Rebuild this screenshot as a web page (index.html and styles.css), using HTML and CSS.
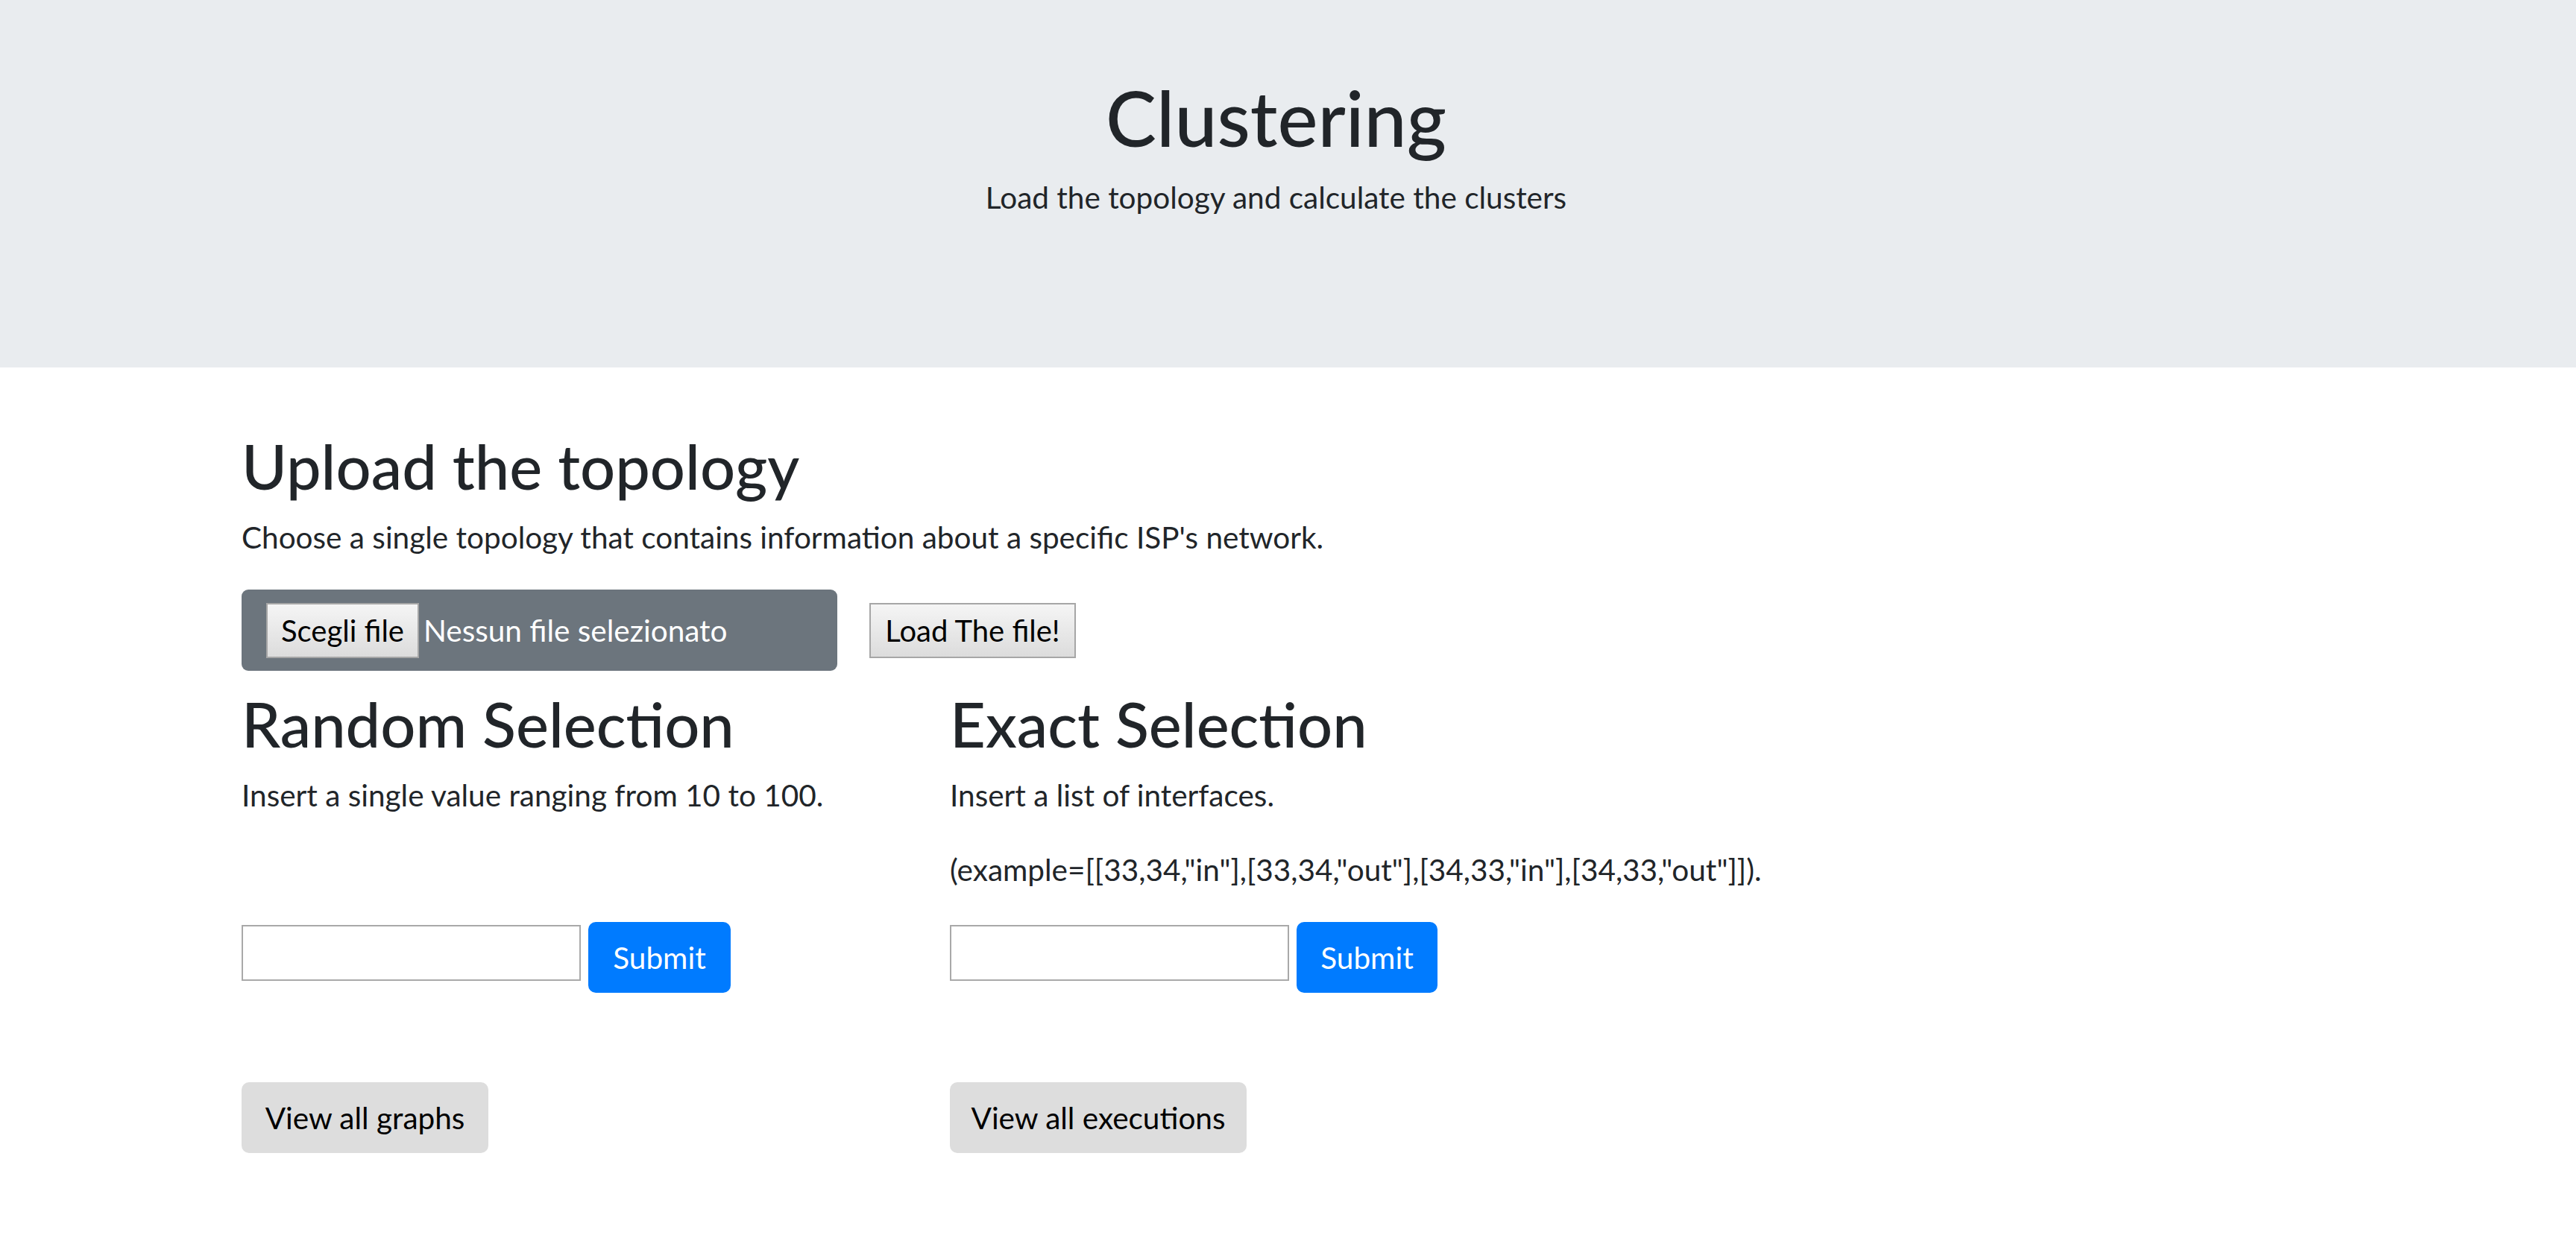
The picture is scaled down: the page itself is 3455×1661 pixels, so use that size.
FILE: index.html
```html
<!DOCTYPE html>
<html lang="en">
<head>
<meta charset="utf-8">
<title>Clustering</title>
<link rel="stylesheet" href="styles.css">
</head>
<body>
<header class="jumbo">
  <div class="wrap">
    <div class="container center">
      <h1 class="title">Clustering</h1>
      <p class="lead">Load the topology and calculate the clusters</p>
    </div>
  </div>
</header>
<main class="wrap">
  <div class="container">
    <h2 class="heading first">Upload the topology</h2>
    <p class="text">Choose a single topology that contains information about a specific ISP's network.</p>
    <div class="upload-row">
      <div class="file-box">
        <span class="native-btn choose-btn">Scegli file</span>
        <span class="file-name">Nessun file selezionato</span>
      </div>
      <button class="native-btn load-btn" type="button">Load The file!</button>
    </div>
    <div class="cols">
      <section class="col">
        <h2 class="heading">Random Selection</h2>
        <p class="text">Insert a single value ranging from 10 to 100.</p>
        <p class="text empty"></p>
        <form class="form-row">
          <input class="field" type="text">
          <button class="btn-primary submit-left" type="button">Submit</button>
        </form>
        <button class="btn-grey graphs" type="button">View all graphs</button>
      </section>
      <section class="col">
        <h2 class="heading">Exact Selection</h2>
        <p class="text">Insert a list of interfaces.</p>
        <p class="text nowrap">(example=[[33,34,"in"],[33,34,"out"],[34,33,"in"],[34,33,"out"]]).</p>
        <form class="form-row">
          <input class="field" type="text">
          <button class="btn-primary submit-right" type="button">Submit</button>
        </form>
        <button class="btn-grey executions" type="button">View all executions</button>
      </section>
    </div>
  </div>
</main>
</body>
</html>
```
FILE: styles.css
```css
* { box-sizing: border-box; }

html, body {
  margin: 0;
  padding: 0;
  background: #ffffff;
}

body {
  font-family: Lato, "Open Sans", "Noto Sans", sans-serif;
  font-size: 40.5px;
  line-height: 60px;
  color: #212529;
}

.wrap {
  width: 3423px;
}

.container {
  width: 2775px;
  margin: 0 auto;
}

.center { text-align: center; }

.jumbo {
  background: #e9ecef;
  height: 493px;
  padding-top: 95px;
}

.title {
  margin: 0;
  font-size: 102px;
  line-height: 125px;
  font-weight: 500;
}

.lead {
  margin: 15px 0 0;
  font-size: 40.5px;
  line-height: 60px;
  font-weight: 400;
}

.heading {
  margin: 21px 0 16px;
  font-size: 83px;
  line-height: 100px;
  font-weight: 500;
  white-space: nowrap;
}

.heading.first { margin-top: 82px; }

.text {
  margin: 0 0 40px;
  white-space: nowrap;
}

.text.empty { height: 60px; }

.upload-row {
  display: flex;
  align-items: center;
  gap: 43px;
}

.file-box {
  display: flex;
  align-items: center;
  width: 799px;
  height: 109px;
  padding: 0 33px;
  background: #6c757d;
  border-radius: 9px;
}

.native-btn {
  display: inline-flex;
  align-items: center;
  justify-content: center;
  height: 74px;
  font-family: inherit;
  font-size: 40px;
  color: #000000;
  background: linear-gradient(#f5f5f5, #dcdcdc);
  border: 2px solid #a6a6a6;
  border-radius: 0;
  padding: 0;
}

.choose-btn { width: 205px; }
.load-btn { width: 277px; }

.file-name {
  margin-left: 6px;
  color: #ffffff;
  white-space: nowrap;
}

.cols {
  display: grid;
  grid-template-columns: 950px 950px 1fr;
}

.col {
  min-width: 0;
}

.form-row {
  display: flex;
  align-items: flex-start;
  gap: 10px;
  margin: 0 0 120px;
}

.field {
  width: 455px;
  height: 75px;
  margin-top: 4px;
  border: 2px solid #a9a9a9;
  background: #ffffff;
  font-family: inherit;
  font-size: 40px;
}

.btn-primary {
  height: 95px;
  border: none;
  border-radius: 10px;
  background: #007bff;
  color: #ffffff;
  font-family: inherit;
  font-size: 40.5px;
  padding: 0;
}

.submit-left { width: 191px; }
.submit-right { width: 189px; }

.btn-grey {
  display: block;
  height: 95px;
  border: none;
  border-radius: 10px;
  background: #dddddd;
  color: #000000;
  font-family: inherit;
  font-size: 40.5px;
  padding: 0;
}

.graphs { width: 331px; }
.executions { width: 398px; }
```
